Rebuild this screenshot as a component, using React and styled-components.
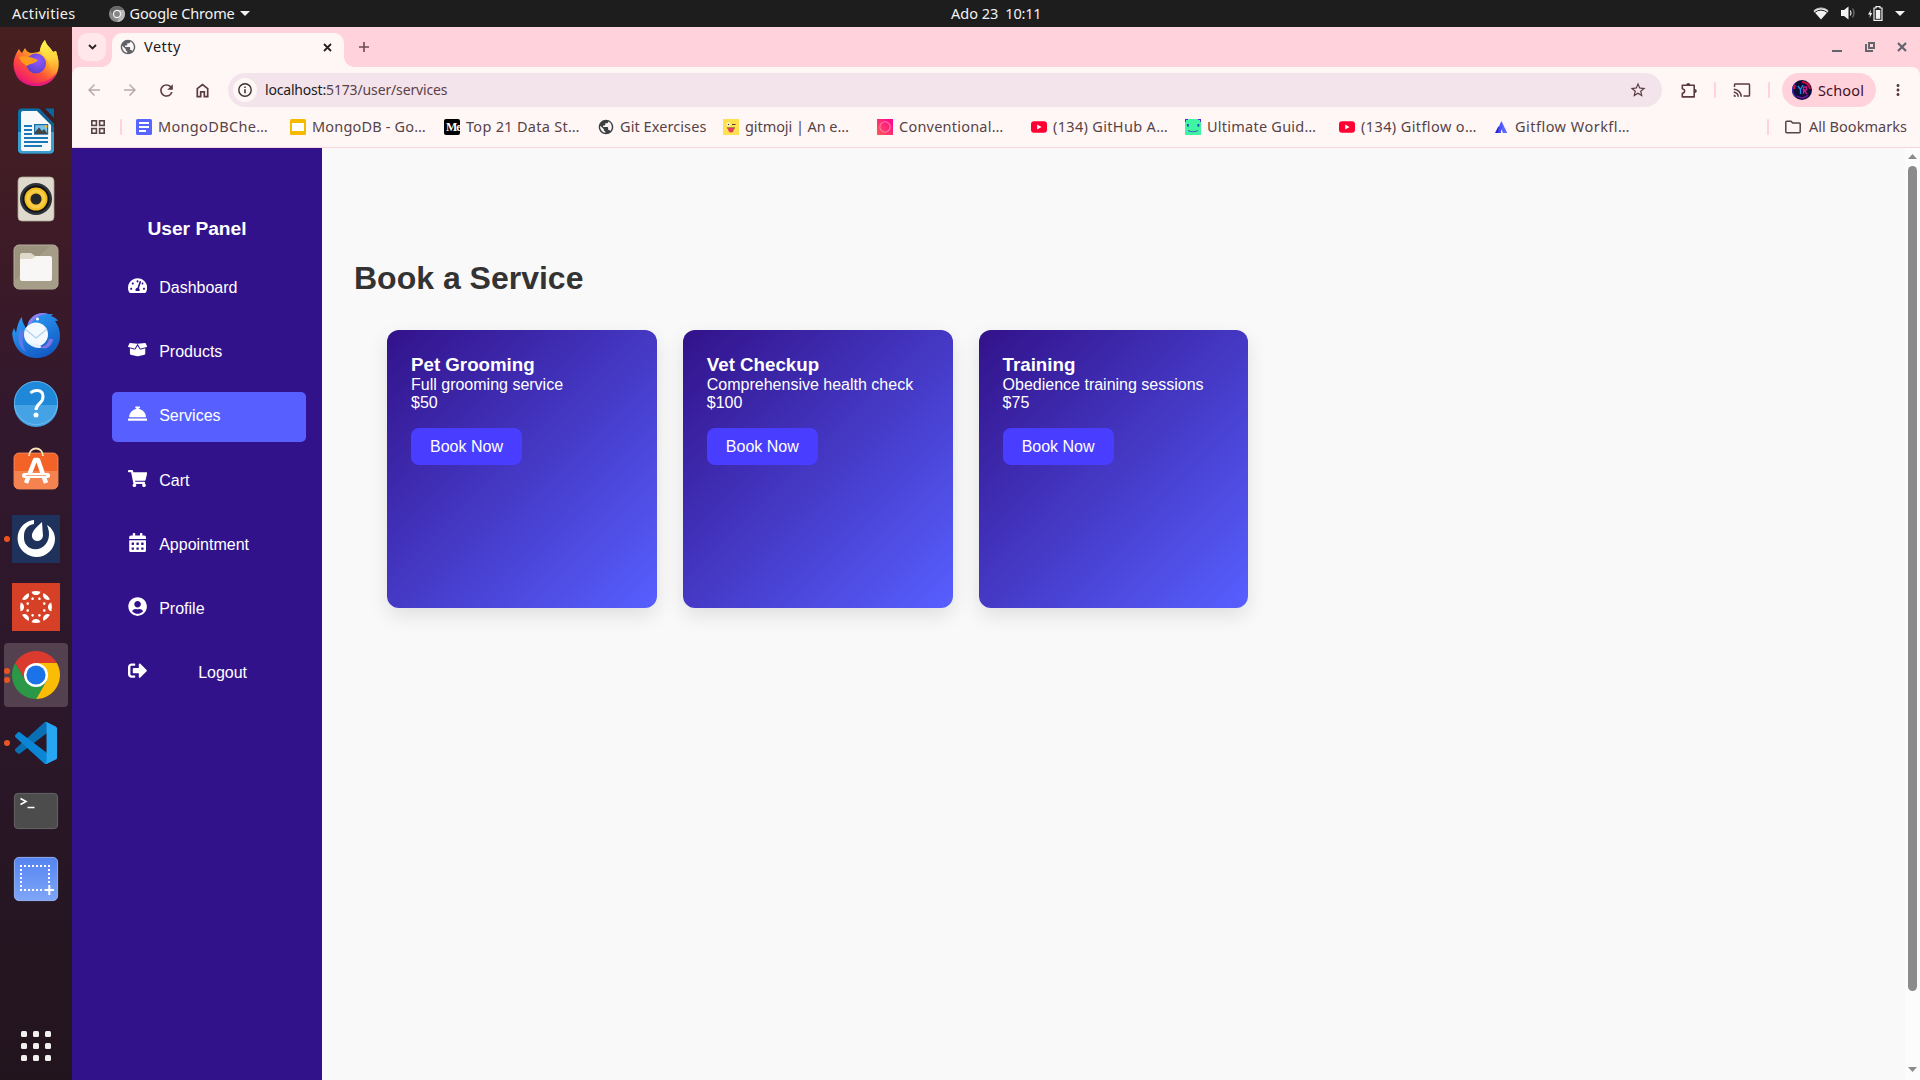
import React from "react";
import styled, { createGlobalStyle, css } from "styled-components";
import {
  MdArrowBack,
  MdArrowForward,
  MdRefresh,
  MdStarBorder,
  MdCast,
  MdMoreVert,
  MdPublic,
} from "react-icons/md";
import {
  FaTachometerAlt,
  FaBoxOpen,
  FaConciergeBell,
  FaShoppingCart,
  FaCalendarAlt,
  FaUserCircle,
  FaSignOutAlt,
} from "react-icons/fa";

const GlobalStyle = createGlobalStyle`
  *, *::before, *::after { box-sizing: border-box; }
  body { margin: 0; overflow: hidden; }
  svg { display: block; flex: none; }
`;

const uiFont = `"Noto Sans", "Open Sans", sans-serif`;
const pageFont = `"Liberation Sans", Arial, sans-serif`;

const Label = styled.span`
  font-family: ${uiFont};
  font-size: ${(p) => p.$size || 14.5}px;
  line-height: 20px;
  letter-spacing: ${(p) => p.$track || 0}px;
  white-space: pre;
`;

const RaisedLabel = styled(Label)`
  padding-bottom: 2px;
`;

/* ---------- Desktop shell ---------- */

const Desktop = styled.div`
  width: 1920px;
  height: 1080px;
  display: flex;
  flex-direction: column;
  overflow: hidden;
  background: #1d1d1d;
`;

const TopBar = styled.header`
  height: 27px;
  flex: none;
  display: grid;
  grid-template-columns: 951px 1fr auto;
  align-items: center;
  padding-right: 15px;
  background: #1d1d1d;
  color: #f2f2f2;
`;

const TopLeft = styled.div`
  display: flex;
  align-items: center;
  padding-left: 12px;
`;

const AppMenu = styled.div`
  display: flex;
  align-items: center;
  gap: 5px;
  margin-left: 33px;
`;

const Clock = styled.div`
  display: flex;
  gap: 7px;
`;

const Tray = styled.div`
  display: flex;
  align-items: center;
  gap: 12px;
  padding-bottom: 1px;
`;

const Workspace = styled.div`
  flex: 1;
  display: flex;
  min-height: 0;
`;

const Dock = styled.nav`
  width: 72px;
  flex: none;
  display: flex;
  flex-direction: column;
  padding: 2px 0 0;
  background: linear-gradient(180deg, #471f20 0%, #3c1a27 22%, #33182d 36%, #2b1729 64%, #22141d 100%);
`;

const DockSlot = styled.div`
  height: 68px;
  flex: none;
  display: flex;
  align-items: center;
  padding: 0 4px;
`;

const DockTile = styled.div`
  width: 64px;
  height: 64px;
  display: grid;
  grid-template-columns: 8px 48px 8px;
  align-items: center;
  border-radius: 4px;
  background: ${(p) => (p.$active ? "#54414f" : "transparent")};
`;

const Dots = styled.div`
  display: flex;
  flex-direction: column;
  align-items: center;
  gap: 3px;
  padding-right: 2px;
`;

const Dot = styled.i`
  width: 6px;
  height: 6px;
  border-radius: 50%;
  background: #e95420;
`;

const DockFooter = styled.div`
  margin-top: auto;
`;

/* ---------- Browser ---------- */

const Browser = styled.main`
  flex: 1;
  min-width: 0;
  display: flex;
  flex-direction: column;
  background: #ffd2dc;
`;

const TabStrip = styled.div`
  height: 40px;
  flex: none;
  display: flex;
  align-items: center;
  padding: 0 13px 0 6px;
`;

const TabSearch = styled.div`
  width: 28px;
  height: 28px;
  display: grid;
  place-items: center;
  border-radius: 9px;
  background: #ffe7eb;
`;

const Tab = styled.div`
  position: relative;
  align-self: flex-end;
  width: 232px;
  height: 34px;
  margin-left: 6px;
  padding: 0 12px 6px 8px;
  display: flex;
  align-items: center;
  gap: 8px;
  border-radius: 10px 10px 0 0;
  background: #fff7f6;
  color: #20191b;

  &::before,
  &::after {
    content: "";
    position: absolute;
    bottom: 0;
    width: 10px;
    height: 10px;
  }
  &::before {
    left: -10px;
    background: radial-gradient(circle at 0 0, transparent 9.5px, #fff7f6 10px);
  }
  &::after {
    right: -10px;
    background: radial-gradient(circle at 100% 0, transparent 9.5px, #fff7f6 10px);
  }
`;

const TabTitle = styled(RaisedLabel)`
  flex: 1;
`;

const NewTab = styled.div`
  margin-left: 15px;
`;

const WindowControls = styled.div`
  margin-left: auto;
  display: flex;
  align-items: center;
  gap: 22.5px;
`;

const Chrome = styled.div`
  flex: none;
  height: 81px;
  background: #fff7f6;
  border-bottom: 1px solid #fad6df;
  border-radius: 8px 8px 0 0;
`;

const Toolbar = styled.div`
  height: 46px;
  display: flex;
  align-items: center;
  padding: 0 13px 0 8px;
  color: #5b3b43;
`;

const NavButtons = styled.div`
  display: flex;
  width: 148px;
`;

const NavButton = styled.div`
  width: 36px;
  display: grid;
  place-items: center;
  color: ${(p) => (p.$disabled ? "#b9a9ac" : "#5b3b43")};
  padding-right: 8px;
`;

const Omnibox = styled.div`
  width: 1434px;
  height: 34px;
  display: flex;
  align-items: center;
  padding: 0 15px 0 5px;
  border-radius: 17px;
  background: #f3e4eb;
`;

const SiteInfo = styled.div`
  width: 24px;
  height: 24px;
  display: grid;
  place-items: center;
  margin-right: 8px;
  border-radius: 50%;
  background: #fff7f6;
`;

const Url = styled.div`
  flex: 1;
  color: #5a4148;
`;

const UrlHost = styled(Label)`
  color: #201a1b;
`;

const Actions = styled.div`
  flex: 1;
  display: flex;
  align-items: center;
  padding-left: 19px;
`;

const Separator = styled.i`
  width: 2px;
  height: 16px;
  flex: none;
  border-radius: 1px;
  background: #ffd2dc;
`;

const ActionIcon = styled.div`
  width: ${(p) => p.$width}px;
  padding-left: ${(p) => p.$indent || 0}px;
  display: flex;
  flex: none;
`;

const ProfileChip = styled.div`
  width: 94px;
  height: 34px;
  display: flex;
  align-items: center;
  gap: 6px;
  margin-left: 12px;
  padding-left: 10px;
  border-radius: 17px;
  background: #ffd2dc;
  color: #42101f;
`;

const Bookmarks = styled.div`
  height: 34px;
  display: flex;
  align-items: center;
  padding: 0 13px 6px 19px;
  color: #574347;
`;

const AppsButton = styled.div`
  width: 29px;
`;

const BookmarkList = styled.div`
  display: flex;
  margin-left: 14px;
`;

const Bookmark = styled.div`
  width: ${(p) => p.$width || 154}px;
  display: flex;
  align-items: center;
  gap: 6px;
`;

const AllBookmarks = styled.div`
  display: flex;
  align-items: center;
  gap: 8px;
  margin-left: auto;

  ${Separator} {
    margin-right: 8px;
  }
`;

/* ---------- Page ---------- */

const Page = styled.div`
  flex: 1;
  min-height: 0;
  display: flex;
  background: #f9f9f9;
  font-family: ${pageFont};
`;

const Sidebar = styled.aside`
  width: 250px;
  flex: none;
  padding: 70px 16px 0 40px;
  background: #32128a;
  color: #fff;
`;

const PanelTitle = styled.h3`
  margin: 0 24px 24px 0;
  padding: 0;
  font-size: 19.2px;
  line-height: 22px;
  text-align: center;
`;

const Menu = styled.div`
  display: flex;
  flex-direction: column;
  gap: 15px;
`;

const MenuItem = styled.div`
  height: 49.2px;
  display: flex;
  padding: 12px 16px;
  border-radius: 5px;
  font-size: 16px;
  line-height: 24px;
  background: ${(p) => (p.$active ? "#575fff" : "transparent")};

  svg {
    width: 19.2px;
    height: 19.2px;
    margin-right: 12px;
  }
`;

const MenuText = styled.span`
  ${(p) =>
    p.$centered &&
    css`
      flex: 1;
      padding-right: 4px;
      text-align: center;
    `}
`;

const Content = styled.section`
  flex: 1;
  padding: 112px 32px 0;
`;

const Heading = styled.h1`
  margin: 0 0 33px;
  font-size: 32px;
  line-height: 37px;
  color: #333;
`;

const Cards = styled.div`
  display: flex;
  gap: 26px;
  padding-left: 33px;
`;

const Card = styled.article`
  width: 269.8px;
  height: 278px;
  padding: 24px;
  border-radius: 12px;
  background: linear-gradient(135deg, #32128a, #575fff);
  box-shadow: 0 8px 20px rgba(0, 0, 0, 0.1);
  color: #fff;
  font-size: 16px;
  line-height: 18px;
`;

const CardTitle = styled.h3`
  margin: 0;
  font-size: 18.72px;
  line-height: 22px;
`;

const CardText = styled.p`
  margin: 0;
`;

const BookButton = styled.button`
  display: block;
  width: 111px;
  height: 37px;
  margin: 16px 0 0;
  padding: 0;
  border: 0;
  border-radius: 8px;
  background: #493dff;
  color: #fff;
  font: 16px/18px ${pageFont};
`;

const Scrollbar = styled.div`
  width: 15px;
  flex: none;
  display: flex;
  flex-direction: column;
  align-items: center;
  padding: 6px 0 8px;
  background: #fcfcfc;
`;

const Thumb = styled.div`
  width: 9px;
  height: 825px;
  margin: 7px 0 auto;
  border-radius: 5px;
  background: #8b8b8b;
`;

/* ---------- Icons ---------- */

const Svg = ({ w, h, box, children, ...rest }) => (
  <svg width={w} height={h || w} viewBox={box || `0 0 ${w} ${h || w}`} fill="none" {...rest}>
    {children}
  </svg>
);

const Triangle = ({ w, h, up, color }) => (
  <Svg w={w} h={h}>
    <path d={up ? `M0 ${h}L${w / 2} 0L${w} ${h}Z` : `M0 0H${w}L${w / 2} ${h}Z`} fill={color} />
  </Svg>
);

const GlobeIcon = ({ color }) => <MdPublic size={16} viewBox="1 1 22 22" color={color} />;

const GrayChromeIcon = () => (
  <Svg w={16}>
    <circle cx="8" cy="8" r="8" fill="#8a8a8a" />
    <path d="M1.1 4A8 8 0 0 1 14.9 4H8L4.5 10Z" fill="#686868" />
    <path d="M14.9 4A8 8 0 0 1 8 16L11.5 10L8 4Z" fill="#b9b9b9" />
    <circle cx="8" cy="8" r="4.2" fill="#f2f2f2" />
    <circle cx="8" cy="8" r="2.9" fill="#858585" />
  </Svg>
);

const WifiIcon = () => (
  <Svg w={16} h={13}>
    <path d="M.5 4A11 11 0 0 1 15.500 4L8 12.500Z" fill="#f2f2f2" />
    <path d="M2 5.300A9.300 9.300 0 0 1 14 5.300" stroke="#1d1d1d" strokeWidth="1" />
    <path d="M.8 3.600A11 11 0 0 1 15.200 3.600" stroke="#b9b9b9" strokeWidth="1" />
  </Svg>
);

const SpeakerIcon = () => (
  <Svg w={15} h={14}>
    <path d="M0 4H3L7.500 .5V13.500L3 10H0Z" fill="#f2f2f2" />
    <path d="M9.300 4.500Q10.800 7 9.300 9.500" stroke="#e0e0e0" strokeWidth="1.300" />
    <path d="M11.500 2.500Q14.500 7 11.500 11.500" stroke="#777" strokeWidth="1.200" />
  </Svg>
);

const BatteryIcon = () => (
  <Svg w={15} h={15}>
    <path d="M3 3.500L0 8.500H2L1.500 12L4.300 7H2.400Z" fill="#f2f2f2" />
    <path d="M8 .6H12V2H14V14.300H6V2H8Z" stroke="#f2f2f2" strokeWidth="1.200" />
    <rect x="7.800" y="4" width="4.500" height="8.800" fill="#f2f2f2" />
  </Svg>
);

const FirefoxIcon = () => (
  <Svg w={48}>
    <defs>
      <linearGradient id="ffBody" x1="38" y1="6" x2="12" y2="44" gradientUnits="userSpaceOnUse">
        <stop stopColor="#fff44f" />
        <stop offset=".35" stopColor="#ffa62b" />
        <stop offset=".65" stopColor="#ff5037" />
        <stop offset="1" stopColor="#ed1674" />
      </linearGradient>
      <linearGradient id="ffTail" x1="32" y1="2" x2="38" y2="38" gradientUnits="userSpaceOnUse">
        <stop stopColor="#fff44f" />
        <stop offset=".5" stopColor="#ffd23c" />
        <stop offset="1" stopColor="#ff8a2a" stopOpacity="0" />
      </linearGradient>
      <radialGradient id="ffGlobe" cx=".6" cy=".35" r=".7">
        <stop stopColor="#9059ff" />
        <stop offset="1" stopColor="#5b3fc6" />
      </radialGradient>
    </defs>
    <path d="M7 10C8 12 9 13 10 14L13 9C14 12 17 14 20 14C25 13 27 14 29 10C29 6 31 3 33 1C34 6 38 8 41 13L44 12C45 16 47 20 46.500 27C46 39 36 47 24 47C11 47 2 38 1.500 26C1.500 20 4 14 7 10Z" fill="url(#ffBody)" />
    <path d="M33 1C34 6 38 8 41 13L44 12C45 16 47 20 46.500 27C46 33 43 38 39 40C40 32 38 24 33 18C29 14 28 13 28 10C29 6 31 3 33 1Z" fill="url(#ffTail)" />
    <path d="M3 34C8 43 18 45 26 44C34 43 41 39 45 33C42 42 34 47 24 47C14 47 6 42 3 34Z" fill="#e31587" opacity=".75" />
    <circle cx="24" cy="24.500" r="10" fill="url(#ffGlobe)" />
    <path d="M7 18C13 16 19 18 26 21C23 25 19 24 15 27C11 25 8 22 7 18Z" fill="#ff9a1f" />
  </Svg>
);

const WriterIcon = () => (
  <Svg w={48}>
    <rect x="6" y="1.500" width="36" height="45" rx="4" fill="#0e6fa5" />
    <path d="M6 25H42V42.500Q42 46.500 38 46.500H10Q6 46.500 6 42.500Z" fill="#3c9fd0" />
    <path d="M26 0H44V20L42 17Z" fill="#3f1b24" />
    <path d="M33 1.500H42V11Z" fill="#0f659a" />
    <path d="M11 4H26L39 17V42Q39 44 37 44H11Q9 44 9 42V6Q9 4 11 4Z" fill="#f7f8f9" />
    <path d="M26 1.500L42 18.500V21L25 4Z" fill="#0d608f" />
    <path d="M12 19H20M12 23H20M12 27H20M12 31H36M12 35H36M12 39H30" stroke="#1a79b8" strokeWidth="2" />
    <rect x="22.600" y="17.600" width="13" height="9.500" fill="#7ac1ea" stroke="#1a6da5" strokeWidth="1.200" />
    <path d="M23 27V25L27 20.500L30 24L32 22L35 26V27Z" fill="#444" />
    <circle cx="34" cy="19.500" r="1.400" fill="#f4b72b" />
  </Svg>
);

const RhythmboxIcon = () => (
  <Svg w={48}>
    <rect x="6" y="2" width="36" height="44" rx="4" fill="#dfdacd" stroke="#aaa392" strokeWidth=".8" />
    <circle cx="24" cy="24" r="16" fill="#2d3238" />
    <circle cx="24" cy="24" r="13.500" fill="#121419" />
    <circle cx="24" cy="24" r="11.500" fill="#f2bd1f" />
    <circle cx="24" cy="24" r="8" stroke="#f8cd48" strokeWidth="3" />
    <circle cx="24" cy="24" r="5.500" fill="#25282b" />
  </Svg>
);

const FilesIcon = () => (
  <Svg w={48}>
    <rect x="2" y="2" width="44" height="44" rx="5" fill="#9b937d" stroke="#b5ae9b" strokeWidth="1" />
    <path d="M2.500 38L38 2.500H41Q45.500 3 45.500 8V40Q45 45 41 45.500H7Q3 45 2.500 41Z" fill="#aba38e" opacity=".6" />
    <path d="M8 14V12Q8 10 10 10H19L23 13H36V17H8Z" fill="#ded9ca" />
    <path d="M8 16H20L24 13H38Q40 13 40 15V36Q40 38 38 38H10Q8 38 8 36Z" fill="#f8f7f5" />
  </Svg>
);

const ThunderbirdIcon = () => (
  <Svg w={48}>
    <defs>
      <linearGradient id="tbBody" x1="12" y1="4" x2="34" y2="46" gradientUnits="userSpaceOnUse">
        <stop stopColor="#2b9cf5" />
        <stop offset="1" stopColor="#1259c4" />
      </linearGradient>
    </defs>
    <path d="M16 12C20 3 29 0 36 3L41 3L39 5C43 6 45 8 46 10L43 10C46 14 48 19 48 25C48 38 37 47 25 47C11 47 1 37 .2 22L2 17L4 22C5 15 7 9 10 6C10 12 13 14 14 18Z" fill="url(#tbBody)" />
    <path d="M16 12C20 3 29 0 36 3C29 3 22 7 19 13Z" fill="#8f7ef0" />
    <path d="M8 19C4 29 8 38 14 41C10 34 10 27 12 20Z" fill="#5a79ea" />
    <circle cx="24" cy="23.500" r="12" fill="#f3f9ff" />
    <path d="M17 32C20 37 26 37 30 37L27 33Z" fill="#e4f1fd" />
    <path d="M13 18L24 27L35 18" stroke="#b5d5f3" strokeWidth="1.500" />
    <path d="M37 28C36 33 32 36 28 36C34 40 40 35 41 28Z" fill="#8275e8" />
    <circle cx="25.500" cy="8" r="1.500" fill="#fff" />
  </Svg>
);

const HelpIcon = () => (
  <Svg w={48}>
    <circle cx="24" cy="24" r="22" fill="#2088d8" />
    <path d="M2 26H46A22 22 0 0 1 2 26Z" fill="#45a2e4" />
    <circle cx="24" cy="24" r="21.600" stroke="#74bff0" strokeWidth=".8" />
    <path d="M18.500 14Q21 11.500 25 11.500Q31 11.500 31 17.500Q31 21.500 27.500 24.500Q24 27.500 24 31" stroke="#fff" strokeWidth="3" />
    <circle cx="24" cy="36" r="2.500" fill="#fff" />
  </Svg>
);

const SoftwareIcon = () => (
  <Svg w={48}>
    <rect x="2" y="6" width="44" height="36" rx="5" fill="#f36327" stroke="#f69262" strokeWidth=".8" />
    <path d="M2 24H46V37Q46 42 41 42H7Q2 42 2 37Z" fill="#f58350" />
    <path d="M17 9C17 -1 31 -1 31 9" stroke="#f7e0b7" strokeWidth="1.800" />
    <path d="M14 36L23 13H26L34 36" stroke="#fff" strokeWidth="4.500" strokeLinejoin="round" />
    <rect x="10" y="26" width="28" height="5" rx="2.500" fill="#fff" />
    <path d="M14 28.500H34" stroke="#f4a787" strokeWidth="1" />
  </Svg>
);

const MattermostIcon = () => (
  <Svg w={48}>
    <rect width="48" height="48" fill="#1e325c" />
    <path d="M22 5C5 7 0 28 13 38C26 48 43 38 43 24C43 18 40 13 35 10C39 19 37 29 29 33C20 37 11 31 12 21C12 14 16 10 22 9Z" fill="#fff" />
    <path d="M30 7C26 11 19 16 20 22C22 28 30 27 31 21Z" fill="#fff" />
  </Svg>
);

const CanvasIcon = () => (
  <Svg w={48}>
    <rect width="48" height="48" fill="#d64027" />
    {[0, 45, 90, 135, 180, 225, 270, 315].map((a) => (
      <g key={a} transform={`rotate(${a} 24 24)`}>
        <path d="M19.500 8.700A16 16 0 0 1 28.500 8.700A4.700 4.700 0 0 1 19.500 8.700Z" fill="#fff" />
        <circle cx="24" cy="15" r="1.300" fill="#fff" transform="rotate(22.500 24 24)" />
      </g>
    ))}
  </Svg>
);

const ChromeIcon = () => (
  <Svg w={48}>
    <path d="M3.220 12A24 24 0 0 1 44.780 12H24L13.610 30Z" fill="#db3a2f" />
    <path d="M44.780 12A24 24 0 0 1 24 48L34.390 30L24 12Z" fill="#fbbc05" />
    <path d="M24 48A24 24 0 0 1 3.220 12L13.610 30H34.390Z" fill="#2a9846" />
    <circle cx="24" cy="24" r="12" fill="#fff" />
    <circle cx="24" cy="24" r="9.600" fill="#1a73e8" />
  </Svg>
);

const CodeIcon = () => (
  <Svg w={48} box="-7 -7 114 114">
    <path d="M96.460 10.800L75.860.88C73.470-.27 70.620.21 68.750 2.080L1.300 63.580C-.52 65.240-.51 68.090 1.300 69.750L6.810 74.750C8.300 76.100 10.530 76.200 12.130 74.990L93.360 13.370C96.090 11.300 100 13.250 100 16.670V16.430C100 14.030 98.620 11.840 96.460 10.800Z" fill="#0a6fb3" />
    <path d="M96.460 89.200L75.860 99.120C73.470 100.270 70.620 99.790 68.750 97.920L1.300 36.420C-.52 34.760-.51 31.910 1.300 30.250L6.810 25.250C8.300 23.900 10.530 23.800 12.130 25.010L93.360 86.630C96.090 88.700 100 86.750 100 83.330V83.570C100 85.970 98.620 88.160 96.460 89.200Z" fill="#0a86d4" />
    <path d="M75.860 99.130C73.470 100.270 70.620 99.790 68.750 97.920C71.060 100.220 75 98.590 75 95.330V4.670C75 1.410 71.060-.22 68.750 2.080C70.620.21 73.470-.27 75.860.87L96.460 10.780C98.620 11.820 100 14.010 100 16.410V83.590C100 85.990 98.620 88.180 96.460 89.220Z" fill="#27a6f2" />
  </Svg>
);

const TerminalIcon = () => (
  <Svg w={48}>
    <rect x="2.400" y="6.400" width="43.200" height="35.200" rx="3.500" fill="#4c4c4c" stroke="#6b6b69" strokeWidth=".9" />
    <path d="M8.500 11.500L14 14.500L8.500 17.500M15.500 20.500H22.500" stroke="#fff" strokeWidth="1.600" />
  </Svg>
);

const ScreenshotIcon = () => (
  <Svg w={48}>
    <defs>
      <linearGradient id="shot" x1="0" y1="0" x2="0" y2="1">
        <stop stopColor="#5484f0" />
        <stop offset="1" stopColor="#7fa6f8" />
      </linearGradient>
    </defs>
    <rect x="2.400" y="2.400" width="43.200" height="43.200" rx="4.500" fill="url(#shot)" stroke="#9bbaf9" strokeWidth=".9" />
    <path d="M8 11H38M8 35H32" stroke="#fff" strokeWidth="2" strokeDasharray="2 2" />
    <path d="M9 14V34M37 14V30" stroke="#fff" strokeWidth="2" strokeDasharray="2 2" />
    <path d="M32.500 35H42M37.300 30V40" stroke="#fff" strokeWidth="2" />
  </Svg>
);

const AppGridIcon = () => (
  <Svg w={48}>
    {[9, 21, 33].map((y) => [9, 21, 33].map((x) => <rect key={`${x}-${y}`} x={x} y={y} width="6" height="6" rx="1.500" fill="#f2f0ef" />))}
  </Svg>
);

const ChevronIcon = () => (
  <Svg w={9} h={6}>
    <path d="M1 1L4.500 4.500L8 1" stroke="#2b1e21" strokeWidth="1.800" />
  </Svg>
);

const CrossIcon = ({ size, width, color }) => (
  <Svg w={size}>
    <path d={`M1 1L${size - 1} ${size - 1}M${size - 1} 1L1 ${size - 1}`} stroke={color} strokeWidth={width} />
  </Svg>
);

const PlusIcon = () => (
  <Svg w={10}>
    <path d="M5 0V10M0 5H10" stroke="#6e4a53" strokeWidth="1.600" />
  </Svg>
);

const HomeIcon = () => (
  <Svg w={13} h={15}>
    <path d="M1.300 13.700V5.600L6.500 1.500L11.700 5.600V13.700H8.300V8.800H4.700V13.700Z" stroke="currentColor" strokeWidth="1.700" />
  </Svg>
);

const InfoIcon = () => (
  <Svg w={14}>
    <circle cx="7" cy="7" r="6.200" stroke="#3c2d31" strokeWidth="1.400" />
    <path d="M7 6.300V10.300M7 3.600V5.100" stroke="#3c2d31" strokeWidth="1.500" />
  </Svg>
);

const PuzzleIcon = () => (
  <Svg w={17} h={17}>
    <path d="M1.300 3.300H13.200V14.900H1.300V11.400Q3.600 11 3.600 9.100Q3.600 7.200 1.300 6.800Z" stroke="currentColor" strokeWidth="1.600" strokeLinejoin="round" />
    <path d="M5.200 3A2.100 2.100 0 0 1 9.400 3ZM13.700 7A2.100 2.100 0 0 1 13.700 11.200Z" fill="currentColor" />
  </Svg>
);

const Avatar = () => (
  <Svg w={20}>
    <circle cx="10" cy="10" r="10" fill="#100c3a" />
    <path d="M3 4A9 9 0 0 0 4 17" stroke="#3527a8" strokeWidth="1.500" />
    <path d="M10 2A8 8 0 0 1 18 9M2 9L3 5M15 3L17 5" stroke="#c4113f" strokeWidth="2" />
    <path d="M5 16A8 8 0 0 0 16 15" stroke="#7214a3" strokeWidth="1.500" />
    <path d="M6 6L8.500 9.500V14M11 5L8.500 9.500" stroke="#1e8fe0" strokeWidth="1.300" />
    <path d="M11.500 14V7H14.500V10H12L15 14" stroke="#c3218b" strokeWidth="1.300" />
  </Svg>
);

const AppsIcon = () => (
  <Svg w={14}>
    {[0.8, 8.6].map((y) => [0.8, 8.6].map((x) => <rect key={`${x}-${y}`} x={x} y={y} width="4.600" height="4.600" stroke="#574347" strokeWidth="1.600" />))}
  </Svg>
);

const FolderIcon = () => (
  <Svg w={16} h={14}>
    <path d="M.8 2.200Q.8 1.200 1.800 1.200H6L7.700 3H14.200Q15.200 3 15.200 4V11.700Q15.200 12.700 14.200 12.700H1.800Q.8 12.700 .8 11.700Z" stroke="#574347" strokeWidth="1.500" />
  </Svg>
);

const MinimizeIcon = () => (
  <Svg w={10}>
    <path d="M0 9H10" stroke="#60646b" strokeWidth="2" />
  </Svg>
);

const RestoreIcon = () => (
  <Svg w={10}>
    <path d="M4 1H9V6H4ZM1 2V9H8" stroke="#60646b" strokeWidth="1.900" />
  </Svg>
);

const DocIcon = () => (
  <Svg w={16}>
    <rect width="16" height="16" rx="1.500" fill="#5865ff" />
    <path d="M3 4H13M3 8H13M3 12H10" stroke="#fff" strokeWidth="1.800" />
  </Svg>
);

const SlidesIcon = () => (
  <Svg w={16}>
    <rect width="16" height="16" rx="1.500" fill="#f5ba00" />
    <rect x="2" y="4" width="12" height="8" fill="#fff" />
  </Svg>
);

const MediumTile = styled.span`
  width: 16px;
  height: 16px;
  flex: none;
  overflow: hidden;
  padding-left: 2px;
  border-radius: 2px;
  background: #000;
  color: #fff;
  font: bold 12px/16px "Liberation Serif", serif;
  letter-spacing: -1px;
`;

const EmojiIcon = () => (
  <Svg w={16}>
    <rect width="16" height="16" fill="#ffe04f" />
    <circle cx="5.500" cy="5.500" r="1.900" fill="#fff" />
    <circle cx="5.500" cy="5.500" r=".8" fill="#333" />
    <path d="M9 5.500H12.500M4 9H12" stroke="#5c3a1c" strokeWidth="1.100" />
    <path d="M5 9H11V10Q10.500 13.500 8 13.500Q5.500 13.500 5 10Z" fill="#e23b5e" />
  </Svg>
);

const ConventionalIcon = () => (
  <Svg w={16}>
    <defs>
      <linearGradient id="conv" x1="0" y1="1" x2="1" y2="0">
        <stop stopColor="#ff5a55" />
        <stop offset="1" stopColor="#fc0093" />
      </linearGradient>
    </defs>
    <rect width="16" height="16" fill="url(#conv)" />
    <circle cx="8" cy="8" r="5.200" stroke="#ff7fae" strokeWidth="1.100" />
  </Svg>
);

const YoutubeIcon = () => (
  <Svg w={16}>
    <rect y="2.300" width="16" height="11.400" rx="3" fill="#f03" />
    <path d="M6.200 5.600L10.600 8L6.200 10.400Z" fill="#fff" />
  </Svg>
);

const GuideIcon = () => (
  <Svg w={16}>
    <rect width="16" height="16" fill="#3ff5a2" />
    <path d="M0 0H3V1H1V3H0ZM16 0H13V1H15V3H16Z" fill="#5a2bd8" />
    <rect x="2" y="5" width="1.800" height="2.600" fill="#2340c8" />
    <rect x="12.500" y="5" width="1.800" height="2.600" fill="#2340c8" />
    <path d="M3 11.500Q8 14 13 11.500" stroke="#4066c8" strokeWidth="1.200" />
  </Svg>
);

const AtlassianIcon = () => (
  <Svg w={16}>
    <path d="M8.500 2L14.200 14H10L7.500 8.500Z" fill="#5b66ff" />
    <path d="M5.500 7L8 14H2Z" fill="#2a20d8" />
    <path d="M8.500 2L9 8L7.500 14H5.500Q4.500 9 8.500 2Z" fill="#4850f5" />
  </Svg>
);

/* ---------- Data ---------- */

const dockApps = [
  { name: "firefox", Icon: FirefoxIcon },
  { name: "writer", Icon: WriterIcon },
  { name: "rhythmbox", Icon: RhythmboxIcon },
  { name: "files", Icon: FilesIcon },
  { name: "thunderbird", Icon: ThunderbirdIcon },
  { name: "help", Icon: HelpIcon },
  { name: "software", Icon: SoftwareIcon },
  { name: "mattermost", Icon: MattermostIcon, windows: 1 },
  { name: "canvas", Icon: CanvasIcon },
  { name: "chrome", Icon: ChromeIcon, windows: 2, active: true },
  { name: "code", Icon: CodeIcon, windows: 1 },
  { name: "terminal", Icon: TerminalIcon },
  { name: "screenshot", Icon: ScreenshotIcon },
];

const bookmarks = [
  { title: "MongoDBChe…", icon: <DocIcon />, track: 0.33 },
  { title: "MongoDB - Go…", icon: <SlidesIcon />, track: 0.17 },
  { title: "Top 21 Data St…", icon: <MediumTile>Me</MediumTile>, track: 0.3 },
  { title: "Git Exercises", icon: <GlobeIcon color="#3c4043" />, track: 0.08, width: 125 },
  { title: "gitmoji | An e…", icon: <EmojiIcon />, track: -0.07 },
  { title: "Conventional…", icon: <ConventionalIcon />, track: 0.22 },
  { title: "(134) GitHub A…", icon: <YoutubeIcon />, track: 0.33 },
  { title: "Ultimate Guid…", icon: <GuideIcon />, track: 0.24 },
  { title: "(134) Gitflow o…", icon: <YoutubeIcon />, track: 0.4 },
  { title: "Gitflow Workfl…", icon: <AtlassianIcon />, track: 0.48 },
];

const menu = [
  { title: "Dashboard", Icon: FaTachometerAlt },
  { title: "Products", Icon: FaBoxOpen },
  { title: "Services", Icon: FaConciergeBell, active: true },
  { title: "Cart", Icon: FaShoppingCart },
  { title: "Appointment", Icon: FaCalendarAlt },
  { title: "Profile", Icon: FaUserCircle },
  { title: "Logout", Icon: FaSignOutAlt, centered: true },
];

const services = [
  { name: "Pet Grooming", description: "Full grooming service", price: "$50" },
  { name: "Vet Checkup", description: "Comprehensive health check", price: "$100" },
  { name: "Training", description: "Obedience training sessions", price: "$75" },
];

/* ---------- App ---------- */

function DockItem({ Icon, windows = 0, active }) {
  return (
    <DockSlot>
      <DockTile $active={active}>
        <Dots>
          {Array.from({ length: windows }, (_, i) => (
            <Dot key={i} />
          ))}
        </Dots>
        <Icon />
      </DockTile>
    </DockSlot>
  );
}

export default function App() {
  return (
    <Desktop>
      <GlobalStyle />
      <TopBar>
        <TopLeft>
          <RaisedLabel $track={0.31}>Activities</RaisedLabel>
          <AppMenu>
            <GrayChromeIcon />
            <RaisedLabel $track={-0.15}>Google Chrome</RaisedLabel>
            <Triangle w={10} h={5} color="#f2f2f2" />
          </AppMenu>
        </TopLeft>
        <Clock>
          <RaisedLabel>Ado 23</RaisedLabel>
          <RaisedLabel $track={-0.2}>10:11</RaisedLabel>
        </Clock>
        <Tray>
          <WifiIcon />
          <SpeakerIcon />
          <BatteryIcon />
          <Triangle w={10} h={5} color="#f2f2f2" />
        </Tray>
      </TopBar>

      <Workspace>
        <Dock>
          {dockApps.map((app) => (
            <DockItem key={app.name} {...app} />
          ))}
          <DockFooter>
            <DockItem Icon={AppGridIcon} />
          </DockFooter>
        </Dock>

        <Browser>
          <TabStrip>
            <TabSearch>
              <ChevronIcon />
            </TabSearch>
            <Tab>
              <GlobeIcon color="#5f6368" />
              <TabTitle $track={0.5}>Vetty</TabTitle>
              <CrossIcon size={9} width={1.8} color="#2b1e21" />
            </Tab>
            <NewTab>
              <PlusIcon />
            </NewTab>
            <WindowControls>
              <MinimizeIcon />
              <RestoreIcon />
              <CrossIcon size={10} width={2.2} color="#60646b" />
            </WindowControls>
          </TabStrip>

          <Chrome>
            <Toolbar>
              <NavButtons>
                <NavButton $disabled>
                  <MdArrowBack size={18} />
                </NavButton>
                <NavButton $disabled>
                  <MdArrowForward size={18} />
                </NavButton>
                <NavButton>
                  <MdRefresh size={19} />
                </NavButton>
                <NavButton>
                  <HomeIcon />
                </NavButton>
              </NavButtons>
              <Omnibox>
                <SiteInfo>
                  <InfoIcon />
                </SiteInfo>
                <Url>
                  <UrlHost $size={14} $track={-0.19}>localhost:</UrlHost>
                  <Label $size={14} $track={-0.14}>5173/user/services</Label>
                </Url>
                <MdStarBorder size={18} />
              </Omnibox>
              <Actions>
                <ActionIcon $width={33}>
                  <PuzzleIcon />
                </ActionIcon>
                <Separator />
                <ActionIcon $width={52} $indent={17}>
                  <MdCast size={18} />
                </ActionIcon>
                <Separator />
                <ProfileChip>
                  <Avatar />
                  <Label $track={0.15}>School</Label>
                </ProfileChip>
                <ActionIcon $width={31} $indent={13}>
                  <MdMoreVert size={18} />
                </ActionIcon>
              </Actions>
            </Toolbar>

            <Bookmarks>
              <AppsButton>
                <AppsIcon />
              </AppsButton>
              <Separator />
              <BookmarkList>
                {bookmarks.map((b) => (
                  <Bookmark key={b.title} $width={b.width}>
                    {b.icon}
                    <RaisedLabel $track={b.track}>{b.title}</RaisedLabel>
                  </Bookmark>
                ))}
              </BookmarkList>
              <AllBookmarks>
                <Separator />
                <FolderIcon />
                <RaisedLabel $track={0.04}>All Bookmarks</RaisedLabel>
              </AllBookmarks>
            </Bookmarks>
          </Chrome>

          <Page>
            <Sidebar>
              <PanelTitle>User Panel</PanelTitle>
              <Menu>
                {menu.map(({ title, Icon, active, centered }) => (
                  <MenuItem key={title} $active={active}>
                    <Icon />
                    <MenuText $centered={centered}>{title}</MenuText>
                  </MenuItem>
                ))}
              </Menu>
            </Sidebar>
            <Content>
              <Heading>Book a Service</Heading>
              <Cards>
                {services.map((s) => (
                  <Card key={s.name}>
                    <CardTitle>{s.name}</CardTitle>
                    <CardText>{s.description}</CardText>
                    <CardText>{s.price}</CardText>
                    <BookButton>Book Now</BookButton>
                  </Card>
                ))}
              </Cards>
            </Content>
            <Scrollbar>
              <Triangle w={9} h={5} up color="#8b8b8b" />
              <Thumb />
              <Triangle w={9} h={5} color="#8b8b8b" />
            </Scrollbar>
          </Page>
        </Browser>
      </Workspace>
    </Desktop>
  );
}
